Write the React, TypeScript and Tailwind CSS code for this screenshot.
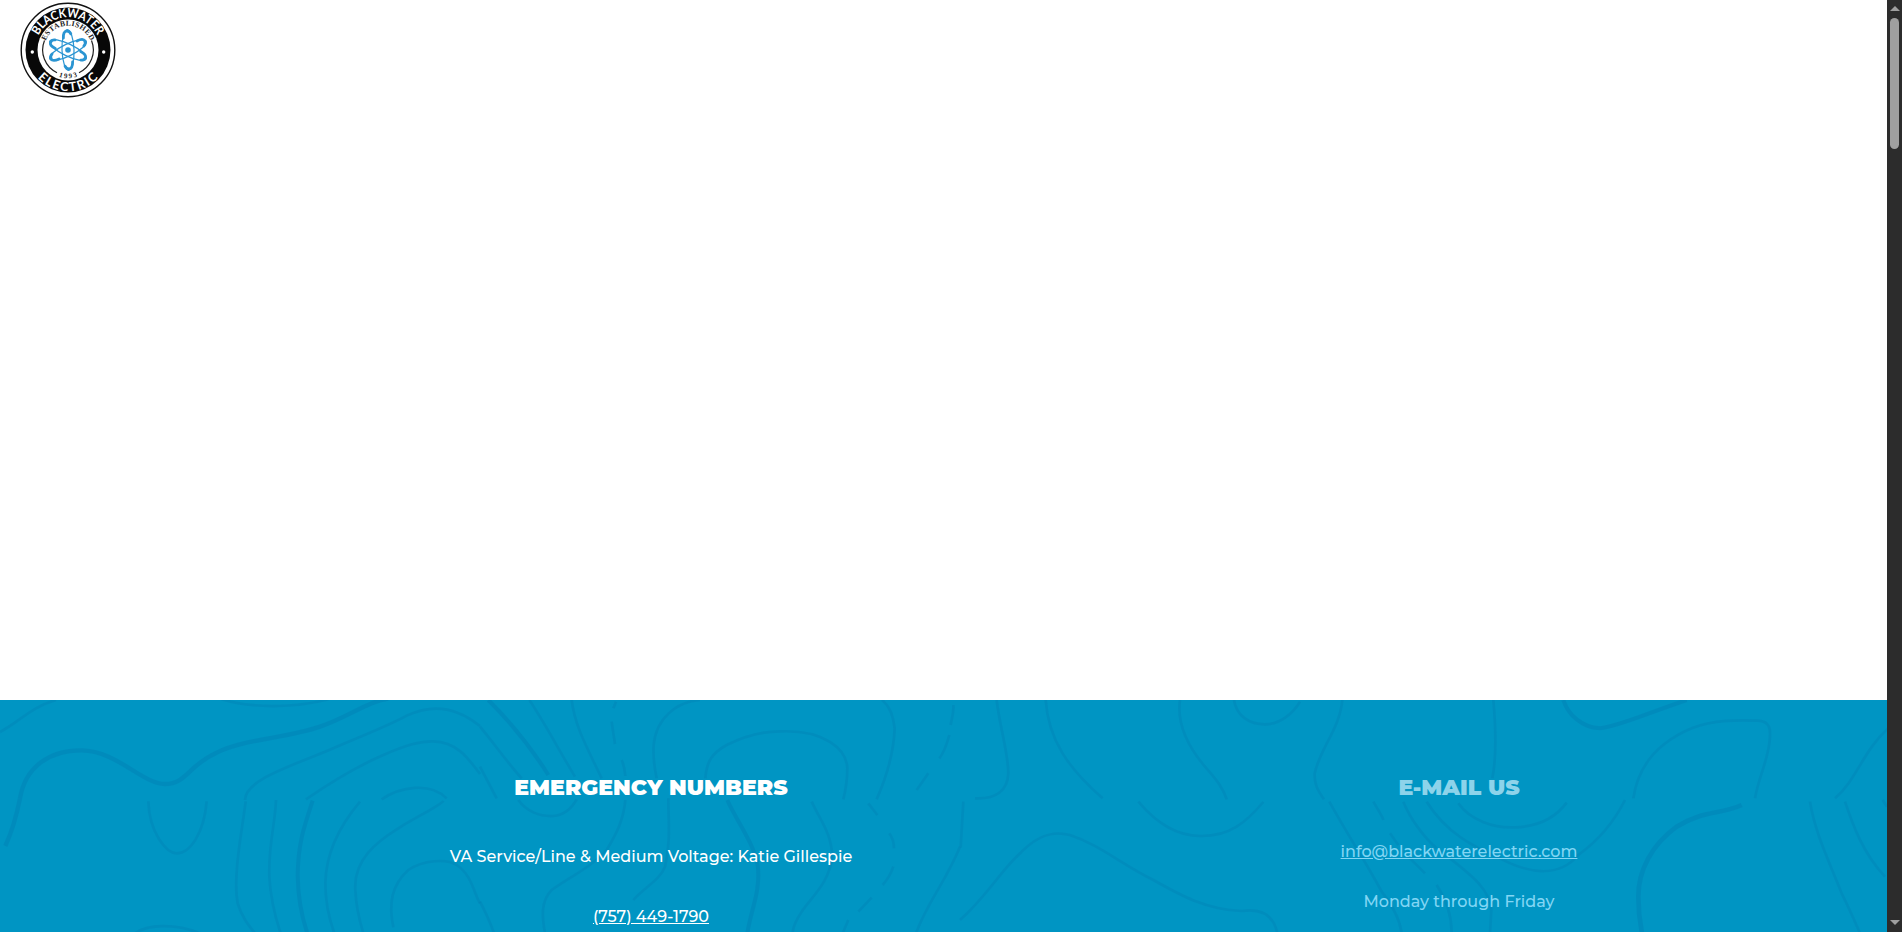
import React from "react";

type Line = { d: string; w?: number };

const tiles: { x: number; lines: Line[] }[] = [
  {
    x: 0,
    lines: [
      { d: "M0 126C60 95 90 52 168 30" },
      { d: "M16 468C38 420 50 375 60 325C76 230 150 180 245 181C350 182 425 281 495 282C560 282 565 225 650 188C740 145 860 145 960 110C1045 82 1100 35 1165 26", w: 13 },
      { d: "M665 28C750 54 880 56 985 28" },
      { d: "M735 330C735 265 900 220 1010 170C1120 125 1180 100 1220 77C1310 35 1380 60 1440 108" },
      { d: "M918 328C1010 265 1080 225 1150 195C1220 165 1260 153 1300 154C1370 155 1405 205 1440 252" },
      { d: "M445 334C448 430 500 490 530 490C570 490 612 430 620 334" },
      { d: "M737 334C725 430 698 560 713 640C725 680 745 705 765 730" },
      { d: "M828 330C825 410 805 460 808 560C812 630 825 680 842 730" },
      { d: "M938 332C915 405 895 450 893 555C894 630 905 680 922 730", w: 12 },
      { d: "M1080 335C1025 400 978 480 976 580C976 640 985 680 1003 730" },
      { d: "M1145 328C1200 290 1290 275 1340 325M1330 332C1325 345 1240 385 1195 415C1130 455 1060 510 1066 600C1068 650 1078 690 1090 730" },
      { d: "M1180 712C1165 640 1175 585 1225 540C1270 510 1340 505 1370 525C1415 555 1420 605 1440 640" },
      { d: "M405 730C440 705 520 698 600 730" },
    ],
  },
  {
    x: 480,
    lines: [
      { d: "M25 30C90 95 155 175 205 255", w: 12 },
      { d: "M0 110C50 170 80 215 125 265" },
      { d: "M148 30C195 100 225 160 285 260" },
      { d: "M275 30C285 110 320 170 365 265" },
      { d: "M408 35L400 55M395 95C398 120 402 140 405 162M425 210C434 230 435 245 436 258" },
      { d: "M660 30C590 35 528 85 521 165C518 210 525 240 530 265" },
      { d: "M676 265C680 215 695 190 740 165C790 140 850 123 905 124C1030 120 1100 175 1102 235C1102 265 1097 300 1090 328" },
      { d: "M1206 30C1225 45 1240 75 1244 115C1241 190 1220 260 1190 328" },
      { d: "M1420 45C1422 70 1414 90 1412 105M1408 135C1400 165 1390 190 1378 205M1345 250L1310 300" },
      { d: "M0 230L50 325M115 330C140 365 180 380 220 378C250 375 275 355 290 328" },
      { d: "M436 330C430 400 400 445 380 480C335 530 280 555 215 600C180 635 187 685 195 730" },
      { d: "M565 325C565 390 573 455 555 530C540 570 490 595 460 630" },
      { d: "M742 330C765 385 820 455 833 525C843 605 812 660 802 730", w: 12 },
      { d: "M995 335C1020 390 1055 430 1057 500C1047 580 995 620 965 665C945 695 938 715 938 730" },
      { d: "M1165 340L1192 375M1228 430Q1242 450 1242 475M1240 530Q1230 560 1208 585M1175 623L1135 665M1105 690L1088 730" },
      { d: "M1440 470C1400 570 1340 640 1308 730" },
      { d: "M0 635C18 670 32 700 42 730" },
    ],
  },
  {
    x: 960,
    lines: [
      { d: "M110 30C120 115 145 190 145 250C143 300 110 328 45 325" },
      { d: "M257 30C265 150 325 235 428 325" },
      { d: "M660 30C650 100 680 165 735 230C770 270 790 295 800 328" },
      { d: "M822 30C830 80 870 103 915 103C960 103 1000 70 1020 35" },
      { d: "M1147 30C1140 115 1080 175 1064 250C1062 290 1080 310 1092 328" },
      { d: "M10 335L2 472" },
      { d: "M535 335C590 400 650 438 720 438C810 440 860 395 910 336" },
      { d: "M0 690C80 620 115 550 185 485C230 440 275 420 330 435C420 465 480 520 580 570C660 615 740 660 845 663C900 655 940 670 952 730" },
      { d: "M1108 335C1160 430 1220 520 1265 605C1300 650 1320 690 1325 730" },
      { d: "M1240 335C1260 370 1268 380 1270 390M1330 335C1350 385 1390 440 1430 475M1290 430L1315 465M1345 500L1395 550" },
      { d: "M1400 335C1460 430 1540 470 1620 505C1715 555 1800 560 1855 495C1910 455 1960 400 1995 330" },
    ],
  },
  {
    x: 1430,
    lines: [
      { d: "M190 30C198 120 200 200 187 265" },
      { d: "M400 30C415 75 455 112 510 115C570 108 650 70 770 30", w: 12 },
      { d: "M610 325C625 220 690 155 785 115C850 88 930 90 985 92C1020 95 1024 115 1018 160C1010 220 985 265 975 325" },
      { d: "M1215 325C1280 270 1300 180 1375 115" },
      { d: "M85 340C120 390 190 415 255 412C320 410 375 385 410 338" },
      { d: "M935 345C870 375 820 360 740 410C665 465 625 540 625 620C625 660 628 690 636 730", w: 14 },
      { d: "M1140 335C1155 430 1200 520 1235 610C1260 660 1275 695 1290 730" },
      { d: "M1245 335C1270 410 1300 490 1365 560M1358 330L1371 350" },
      { d: "M60 505C130 560 180 600 184 660L180 730M20 585C50 630 65 680 65 730" },
    ],
  },
];

function ContourLines() {
  return (
    <svg className="absolute inset-0 h-full w-full" viewBox="0 0 1887 232" fill="none" stroke="#007eb2" aria-hidden="true">
      {tiles.map((tile) => (
        <g key={tile.x} transform={`translate(${tile.x} -10) scale(0.33333)`}>
          {tile.lines.map((line) => (
            <path key={line.d} d={line.d} strokeWidth={line.w ?? 8} strokeOpacity={line.w ? 0.42 : 0.34} />
          ))}
        </g>
      ))}
    </svg>
  );
}

const orbits = ["rotate(-2 48 48)", "rotate(64 48 48)", "rotate(-64 48 48)"];

function Logo() {
  return (
    <svg className="h-24 w-24" viewBox="0 0 96 96" role="img" aria-label="Blackwater Electric">
      <defs>
        <path id="ringTop" d="M15.2 48A32.8 32.8 0 0 1 80.8 48" />
        <path id="ringBottom" d="M6.9 48A41.1 41.1 0 0 0 89.1 48" />
        <path id="innerTop" d="M23.7 48A24.3 24.3 0 0 1 72.3 48" />
        <path id="innerBottom" d="M19.8 48A28.2 28.2 0 0 0 76.2 48" />
      </defs>
      <circle cx="48" cy="48" r="46.8" fill="#fff" stroke="#111" strokeWidth="1.4" />
      <circle cx="48" cy="48" r="42.5" fill="#080808" />
      <circle cx="48" cy="48" r="30.5" fill="#fff" />
      <path d="M24.5 38.5A25.2 25.2 0 0 0 37 70.7M71.5 38.5A25.2 25.2 0 0 1 59 70.7" fill="none" stroke="#222" strokeWidth="1.2" />
      <g fill="#fff" fontFamily="Lato, sans-serif" fontWeight="700" fontSize="12.4" textAnchor="middle">
        <text><textPath href="#ringTop" startOffset="50%" textLength="73" lengthAdjust="spacingAndGlyphs">BLACKWATER</textPath></text>
        <text><textPath href="#ringBottom" startOffset="50%" textLength="68">ELECTRIC</textPath></text>
      </g>
      <g fill="#222" fontFamily="Liberation Serif, serif" fontWeight="700" textAnchor="middle">
        <text fontSize="7.6"><textPath href="#innerTop" startOffset="50%" textLength="57">ESTABLISHED</textPath></text>
        <text fontSize="7"><textPath href="#innerBottom" startOffset="50%" textLength="19">1993</textPath></text>
      </g>
      <circle cx="12.3" cy="50" r="1.7" fill="#fff" />
      <circle cx="83.7" cy="50" r="1.7" fill="#fff" />
      <g fill="none" stroke="#2b95d2" strokeWidth="1.2">
        {orbits.map((rotation) => (
          <g key={rotation} transform={rotation}>
            <ellipse cx="48" cy="48" rx="6" ry="20.3" />
            <path d="M43.8 36Q43.7 29 47.5 29Q50.3 29 51.4 32M44.5 64Q45.7 67 48.5 67Q52 67 52.2 60" strokeWidth="2.8" strokeLinecap="round" />
          </g>
        ))}
      </g>
      <circle cx="48" cy="48" r="2.8" fill="#2b95d2" />
    </svg>
  );
}

function Scrollbar() {
  return (
    <div className="flex h-full w-[15px] shrink-0 flex-col items-center bg-[#2c2c2c] pt-1.5 pb-[7px]" aria-hidden="true">
      <svg className="h-[5px] w-[10px] shrink-0" viewBox="0 0 10 5"><path d="M0 5L5 0L10 5Z" fill="#9f9f9f" /></svg>
      <div className="mt-[7px] h-[131px] w-[9px] rounded-full bg-[#9f9f9f]" />
      <svg className="mt-auto h-[5px] w-[10px] shrink-0" viewBox="0 0 10 5"><path d="M0 0H10L5 5Z" fill="#9f9f9f" /></svg>
    </div>
  );
}

export default function App() {
  return (
    <div className="flex h-screen w-full overflow-hidden bg-white font-['Montserrat','Inter',sans-serif]">
      <div className="flex min-w-0 flex-1 flex-col">
        <header className="h-[700px] shrink-0 pt-[2.2px] pl-[19.5px]">
          <Logo />
        </header>
        <section className="relative min-h-0 flex-1 overflow-hidden bg-[#0095c3]">
          <ContourLines />
          <div className="relative flex justify-center whitespace-nowrap pt-[72px] pl-[223px] text-center text-base/6 font-medium text-white">
            <div className="flex w-[808px] flex-col items-center">
              <h2 className="text-[22px]/8 font-black">EMERGENCY NUMBERS</h2>
              <p className="mt-[41px]">VA Service/Line &amp; Medium Voltage: Katie Gillespie</p>
              <a href="tel:7574491790" className="mt-9 underline">(757) 449-1790</a>
            </div>
            <div className="flex w-[808px] flex-col items-center text-[#82d6f4]">
              <h2 className="text-[22px]/8 font-black text-[#8dd3ea]">E-MAIL US</h2>
              <a href="mailto:info@blackwaterelectric.com" className="mt-9 underline">info@blackwaterelectric.com</a>
              <p className="mt-[26px]">Monday through Friday</p>
            </div>
          </div>
        </section>
      </div>
      <Scrollbar />
    </div>
  );
}
